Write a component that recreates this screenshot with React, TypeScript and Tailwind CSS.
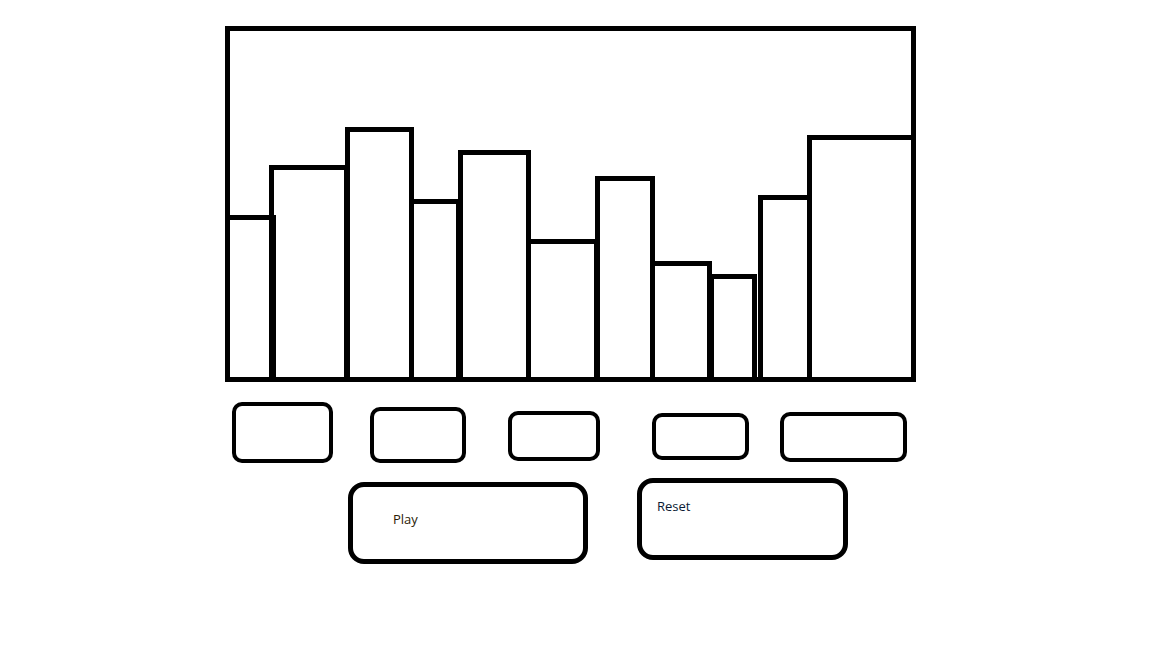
import React from "react";

const bars = [
  { w: 51, h: 167, ml: 0 },
  { w: 80, h: 217, ml: -7 },
  { w: 69, h: 255, ml: -4 },
  { w: 52, h: 183, ml: -5 },
  { w: 73, h: 232, ml: -3 },
  { w: 73, h: 143, ml: -5 },
  { w: 60, h: 206, ml: -4 },
  { w: 62, h: 121, ml: -5 },
  { w: 48, h: 108, ml: -3 },
  { w: 54, h: 187, ml: 1 },
  { w: 109, h: 247, ml: -5 },
];

export default function App() {
  return (
    <div
      className="w-[1152px] h-[648px] bg-white overflow-hidden pl-[225px] pt-[26px]"
      style={{ fontFamily: '"Open Sans", "Noto Sans", sans-serif' }}
    >
      {/* Chart frame */}
      <div className="box-border w-[691px] h-[356px] border-[5px] border-black">
        <div className="flex items-end h-[356px] -m-[5px]">
          {bars.map((b, i) => (
            <div
              key={i}
              className="box-border flex-none border-[5px] border-black"
              style={{ width: b.w, height: b.h, marginLeft: b.ml }}
            />
          ))}
        </div>
      </div>

      {/* Small controls row */}
      <div className="flex items-start">
        <div className="box-border ml-[7px] mt-[20px] w-[101px] h-[61px] border-4 border-black rounded-[10px]" />
        <div className="box-border ml-[37px] mt-[25px] w-[96px] h-[56px] border-4 border-black rounded-[10px]" />
        <div className="box-border ml-[42px] mt-[29px] w-[92px] h-[50px] border-4 border-black rounded-[10px]" />
        <div className="box-border ml-[52px] mt-[31px] w-[97px] h-[47px] border-4 border-black rounded-[10px]" />
        <div className="box-border ml-[31px] mt-[30px] w-[127px] h-[50px] border-4 border-black rounded-[10px]" />
      </div>

      {/* Play / Reset */}
      <div className="flex items-start">
        <button className="box-border ml-[123px] mt-[19px] w-[240px] h-[82px] border-[5px] border-black rounded-[16px] bg-white text-left pl-[40px] pt-[23px] self-start flex items-start">
          <span className="text-[13px] leading-[18px] text-[#2a1c05]">Play</span>
        </button>
        <button className="box-border ml-[49px] mt-[15px] w-[211px] h-[82px] border-[5px] border-black rounded-[16px] bg-white text-left pl-[15px] pt-[14px] self-start flex items-start">
          <span className="text-[13px] leading-[18px] text-[#0a1a33]">Reset</span>
        </button>
      </div>
    </div>
  );
}
